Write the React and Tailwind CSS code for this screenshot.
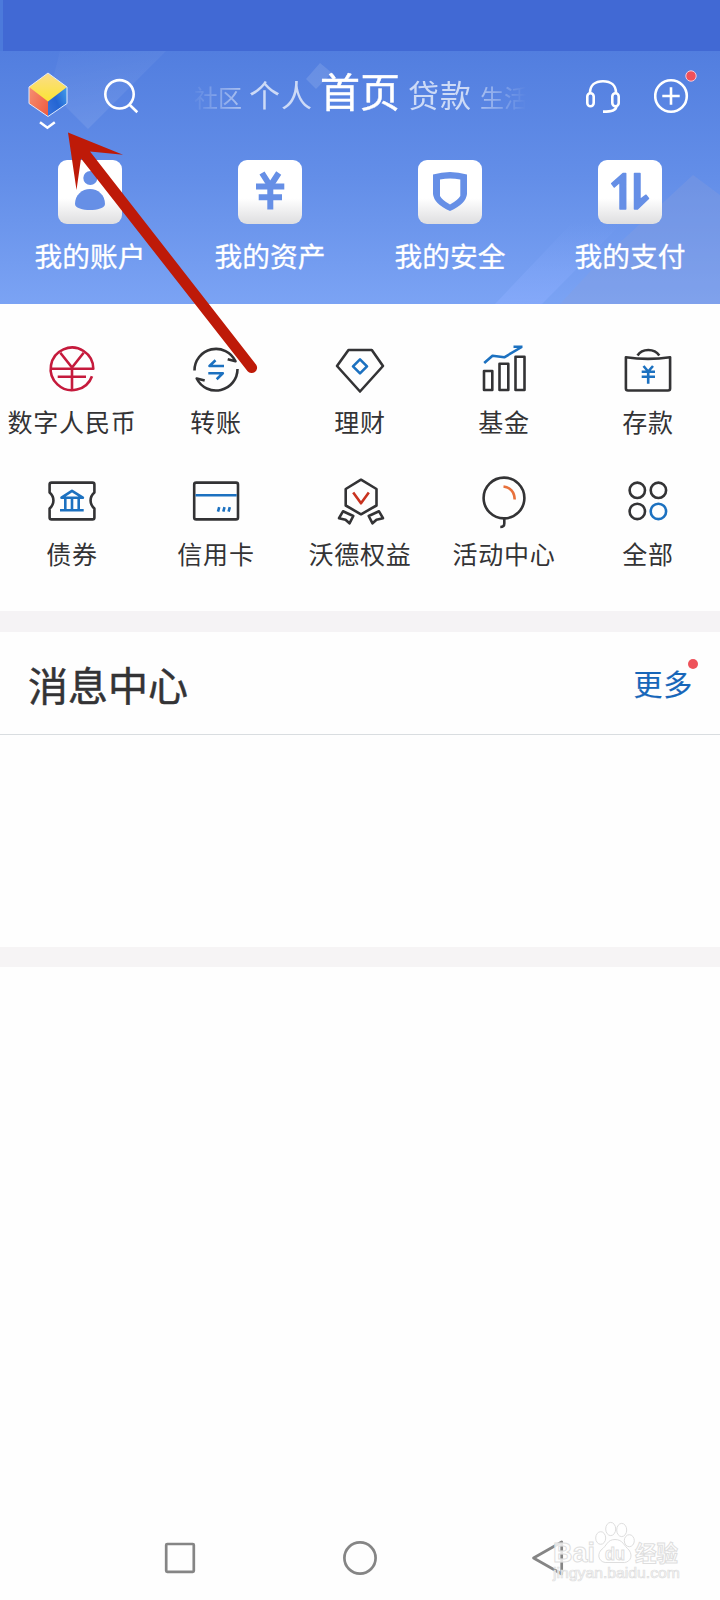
import React from 'react';

const tabs = [
  { label: '社区', cls: 'text-[24px] opacity-60 mr-[7px]' },
  { label: '个人', cls: 'text-[31px] opacity-70 tracking-[1px] mr-[7px]' },
  { label: '首页', cls: 'text-[40px] mr-[8px] [-webkit-text-stroke:0.4px_#fff]' },
  { label: '贷款', cls: 'text-[31px] opacity-70 tracking-[1px] mr-[8px]' },
  { label: '生活', cls: 'text-[24px] opacity-60' },
];

const shortcuts = [
  {
    label: '我的账户',
    icon: (
      <g fill="#668fe6">
        <circle cx="32.3" cy="18" r="7" />
        <path d="M17 44C17 35 24 29 32 29S47 35 47 44C47 48 39 50 32 50S17 48 17 44Z" />
      </g>
    ),
  },
  {
    label: '我的资产',
    icon: (
      <g fill="none" stroke="#668fe6" strokeWidth="6" strokeLinejoin="round">
        <path d="M24 13L32.3 26L40.7 13M32.3 25V49.5" />
        <path d="M18 26.5H46.3M20.7 37.3H44" />
      </g>
    ),
  },
  {
    label: '我的安全',
    icon: (
      <path
        fill="#668fe6"
        fillRule="evenodd"
        d="M15 14.5Q32 9.5 49 14.5V34Q48 44 32 51Q16 44 15 34ZM22 19.5V36Q24 40 32 44.5Q40 40 42.3 36V19.5Q32 17.5 22 19.5Z"
      />
    ),
  },
  {
    label: '我的支付',
    icon: (
      <g fill="#668fe6" stroke="#668fe6" strokeWidth="1.5" strokeLinejoin="round">
        <path d="M13.7 23.5L25 13.5H27.7V49H22V22L16.3 27Z" />
        <path d="M36.5 13.5H42V39.5L48 35.2L50.5 38.5L39.5 49H36.5Z" />
      </g>
    ),
  },
];

const services = [
  {
    label: '数字人民币',
    icon: (
      <g stroke="#c51a3c">
        <path d="M48 35.2A21.3 21.3 0 1 1 49.3 27.7H6.7" />
        <path d="M16.3 11.7L28 26.5L39.7 11.7M28 26V50M13.7 35.7H42" />
      </g>
    ),
  },
  {
    label: '转账',
    icon: (
      <g>
        <path d="M6.5 29.5A21.5 21.5 0 0 1 47.5 20.3L39.7 18.3" />
        <path d="M49.5 28A21.5 21.5 0 0 1 8.7 37.5L16.7 39.5" />
        <path stroke="#1c71c0" d="M36 25H21.5L27.5 19.3M20.3 32.3H34.8L28.7 38.3" />
      </g>
    ),
  },
  {
    label: '理财',
    icon: (
      <g>
        <path d="M16.5 9H39.8L51 25L28 50.5L5 25Z" />
        <path stroke="#1c71c0" d="M28 18.3L35 25.3L28 32.3L21 25.3Z" />
      </g>
    ),
  },
  {
    label: '基金',
    icon: (
      <g>
        <path d="M8 30H16.3V49H8ZM23.5 22.7H32.3V49H23.5ZM39.5 15.8H48.5V49H39.5Z" />
        <path stroke="#1c71c0" d="M8.2 22L16.5 14.7L28.3 16.3L45.7 6M37.5 5.7H46.5" />
      </g>
    ),
  },
  {
    label: '存款',
    icon: (
      <g>
        <path d="M5.9 16.3Q28 19.5 50.1 16.3V47.5Q50.1 49.5 48 49.5H8Q5.9 49.5 5.9 47.5Z" />
        <path d="M17.5 14.5Q21 9 28.3 9T39.3 14.5" />
        <path stroke="#1c71c0" d="M23.5 25L28.2 30.5L33 25M21.7 30.7H35M21.7 35.7H35M28.2 30.5V42.7" />
      </g>
    ),
  },
  {
    label: '债券',
    icon: (
      <g>
        <path d="M7.5 9.6H48.5Q50.4 9.6 50.4 11.5V19.5C45.3 24 45.3 31 50.4 35.5V44.5Q50.4 46.4 48.5 46.4H7.5Q5.6 46.4 5.6 44.5V35.5C10.7 31 10.7 24 5.6 19.5V11.5Q5.6 9.6 7.5 9.6Z" />
        <path stroke="#1c71c0" d="M17.5 24.7L28 17.8L38.8 24.7ZM21.3 25V37M28 25V37M34.7 25V37M16 37.3H39.7" />
      </g>
    ),
  },
  {
    label: '信用卡',
    icon: (
      <g>
        <rect x="6.2" y="9.6" width="43.8" height="36.8" rx="2" />
        <path stroke="#1c71c0" d="M7.5 22.2H48.7M31.2 34.2L30 38.7M36.5 34.2L35.3 38.7M41.8 34.2L40.6 38.7" />
      </g>
    ),
  },
  {
    label: '沃德权益',
    icon: (
      <g>
        <path d="M29 6.7L44.5 16V32.5L29 41.3L13.7 32.5V16Z" />
        <path d="M11 38.3L21.3 43L17.5 50.3L13.5 46.7L7 45.2Z" />
        <path d="M47 38.3L36.7 43L40.5 50.3L44.5 46.7L51 45.2Z" />
        <path stroke="#c8321f" d="M21.2 19.5L29 30.3L36.8 19.5" />
      </g>
    ),
  },
  {
    label: '活动中心',
    icon: (
      <g>
        <circle cx="28" cy="25" r="20.4" />
        <path d="M28.3 46V50.5Q28.3 54 24.3 54" />
        <path stroke="#e8713c" d="M27.5 13.5C34 14.3 38.5 19 38.7 26.5" />
      </g>
    ),
  },
  {
    label: '全部',
    icon: (
      <g>
        <circle cx="17.3" cy="17.3" r="7.7" />
        <circle cx="38.4" cy="17.3" r="7.7" />
        <circle cx="17.3" cy="38.4" r="7.7" />
        <circle cx="38.4" cy="38.4" r="7.7" stroke="#1c71c0" />
      </g>
    ),
  },
];

function Logo() {
  return (
    <svg className="w-[40px] h-[58px]" viewBox="0 0 40 58" fill="none">
      <defs>
        <linearGradient id="logoTop" x1="0" y1="0" x2="0" y2="1">
          <stop offset="0" stopColor="#fbdc8a" />
          <stop offset="1" stopColor="#fbe534" />
        </linearGradient>
        <linearGradient id="logoLeft" x1="0" y1="0" x2="1" y2="1">
          <stop offset="0" stopColor="#f79a7c" />
          <stop offset="1" stopColor="#ee5a3f" />
        </linearGradient>
        <linearGradient id="logoRight" x1="1" y1="0" x2="0" y2="1">
          <stop offset="0" stopColor="#4fb4f4" />
          <stop offset="0.6" stopColor="#2465d3" />
          <stop offset="1" stopColor="#3974dc" />
        </linearGradient>
      </defs>
      <path d="M20 1L1 15V31.5L20 44.5Z" fill="url(#logoLeft)" />
      <path d="M20 1L39 15V31.5L20 44.5Z" fill="url(#logoRight)" />
      <path d="M20 1L39 15L20 29.5L1 15Z" fill="url(#logoTop)" />
      <path d="M20 1L39 15V31.5L20 44.5L1 31.5V15Z" stroke="#dfeafd" strokeWidth="1" />
      <path d="M12 50.3L19.4 55.8L26.8 50.3" stroke="#fff" strokeWidth="2.5" />
    </svg>
  );
}

function HeaderBackdrop() {
  return (
    <svg className="absolute inset-0 w-full h-full" viewBox="0 0 720 253" preserveAspectRatio="none">
      <defs>
        <linearGradient id="beam" x1="0" y1="0" x2="0.3" y2="1">
          <stop offset="0" stopColor="#fff" stopOpacity="0.02" />
          <stop offset="1" stopColor="#fff" stopOpacity="0.09" />
        </linearGradient>
        <linearGradient id="ray" x1="0" y1="0" x2="0" y2="1">
          <stop offset="0" stopColor="#7fa4f6" stopOpacity="0" />
          <stop offset="1" stopColor="#86aafb" stopOpacity="0.8" />
        </linearGradient>
      </defs>
      <path d="M60 0H166L88 78L50 40Z" fill="url(#beam)" />
      <path d="M320 12L332 22L316 38L306 28Z" fill="#fff" opacity="0.12" />
      <path d="M572 172H622L542 253H495Z" fill="url(#ray)" />
      <path d="M693 124L720 144V253H560L600 210Z" fill="#8a9edb" opacity="0.3" />
    </svg>
  );
}

function Header() {
  return (
    <header className="relative h-[253px] bg-linear-to-b from-[#527edf] via-[#638ee8] to-[#7ba3f4] text-white overflow-hidden">
      <HeaderBackdrop />
      <div className="relative flex items-start h-[109px] pl-[28px]">
        <div className="pt-[21px]">
          <Logo />
        </div>
        <svg className="w-[36px] h-[36px] mt-[27px] ml-[35px]" viewBox="0 0 36 36" fill="none" stroke="#fff" strokeWidth="2.6">
          <circle cx="16.5" cy="16.3" r="14.2" />
          <path d="M26.3 26.5L34.3 34.3" />
        </svg>
        <nav className="flex items-baseline w-[340px] h-[80px] ml-[51px] pt-[10px] pl-1 leading-[58px] whitespace-nowrap overflow-hidden mask-[linear-gradient(to_right,transparent,#000_18%,#000_82%,transparent_99%)]">
          {tabs.map((tab) => (
            <span key={tab.label} className={tab.cls}>
              {tab.label}
            </span>
          ))}
        </nav>
        <svg className="w-[36px] h-[36px] mt-[28px] ml-[55px]" viewBox="0 0 36 36" fill="none" stroke="#fff" strokeWidth="2.6">
          <path d="M5 14C5 6.5 10 2.3 18 2.3S31 6.5 31 14" />
          <rect x="2.3" y="14.3" width="6.4" height="13" rx="3.2" />
          <rect x="27.3" y="14.3" width="6.4" height="13" rx="3.2" />
          <path d="M31.5 27C31 31.5 27 32.5 18 32.6" />
        </svg>
        <svg className="w-[46px] h-[48px] mt-[17px] ml-[33px]" viewBox="0 0 46 48" fill="none" stroke="#fff" strokeWidth="2.6">
          <circle cx="17" cy="28" r="15.8" />
          <path d="M17 19.3V36.7M8.3 28H25.7" />
          <circle cx="37" cy="8" r="5.2" fill="#f0505a" stroke="#f3c9dc" strokeWidth="1" />
        </svg>
      </div>
      <div className="relative grid grid-cols-4">
        {shortcuts.map((item) => (
          <div key={item.label} className="flex flex-col items-center">
            <div className="w-[64px] h-[64px] rounded-[9px] bg-linear-to-b from-white from-60% to-[#dedee0]">
              <svg className="w-full h-full" viewBox="0 0 64 64">
                {item.icon}
              </svg>
            </div>
            <span className="mt-[11px] text-[27.7px] leading-[40px] [-webkit-text-stroke:0.3px_#fff]">{item.label}</span>
          </div>
        ))}
      </div>
    </header>
  );
}

function Services() {
  return (
    <section className="grid grid-cols-5 gap-y-[32px] h-[307px] content-start pt-[37px]">
      {services.map((item) => (
        <div key={item.label} className="flex flex-col items-center">
          <svg
            className="w-[56px] h-[56px]"
            viewBox="0 0 56 56"
            fill="none"
            stroke="#333335"
            strokeWidth="2.6"
            strokeLinejoin="round"
          >
            {item.icon}
          </svg>
          <span className="mt-[4px] h-[40px] text-[25px] leading-[40px] tracking-[0.8px] whitespace-nowrap">{item.label}</span>
        </div>
      ))}
    </section>
  );
}

function MessageCenter() {
  return (
    <section className="h-[315px]">
      <div className="flex items-center justify-between h-[103px] pl-[28px] pr-[27px] border-b border-[#d9dde0]">
        <h2 className="pt-[2px] text-[40px] leading-[56px] [-webkit-text-stroke:0.5px_#333335]">消息中心</h2>
        <a className="relative text-[29px] leading-[40px] tracking-[0.7px] text-[#1766b9] [-webkit-text-stroke:0.2px_#1766b9]">
          更多
          <span className="absolute -top-[4px] -right-[5px] w-[10px] h-[10px] rounded-full bg-[#ee525a]" />
        </a>
      </div>
    </section>
  );
}

function Watermark() {
  return (
    <svg
      className="absolute right-[36px] bottom-[12px] w-[136px] h-[68px]"
      viewBox="0 0 136 68"
      fill="#fff"
      fillOpacity="0.8"
      stroke="#dedede"
      strokeWidth="1"
      fontFamily='"Liberation Sans", "Noto Sans CJK SC", sans-serif'
      fontWeight="700"
    >
      <ellipse cx="52.7" cy="18" rx="5" ry="6.3" />
      <ellipse cx="62.7" cy="9" rx="5" ry="6.6" />
      <ellipse cx="73.7" cy="10" rx="5" ry="6.6" />
      <ellipse cx="81.3" cy="20.7" rx="5" ry="6" />
      <path d="M67 19.5C75 19.5 76 26 81 30C86 37 81 43.5 74 42.5H60C52 43.5 48 36 53 30C59 26 59 19.5 67 19.5Z" />
      <text x="5" y="42" fontSize="27" textLength="42" lengthAdjust="spacingAndGlyphs">Bai</text>
      <text x="57" y="39.5" fontSize="18" textLength="20" lengthAdjust="spacingAndGlyphs">du</text>
      <text x="87" y="41" fontSize="21.5">经验</text>
      <text x="5" y="58" fontSize="14" fontWeight="400" strokeWidth="0.7" textLength="127" lengthAdjust="spacingAndGlyphs">jingyan.baidu.com</text>
    </svg>
  );
}

function NavBar() {
  return (
    <footer className="relative grid grid-cols-3 items-center justify-items-center h-[84px] px-[90px]">
      <svg className="w-[36px] h-[36px]" viewBox="0 0 36 36" fill="none" stroke="#858585" strokeWidth="2.7">
        <rect x="4.2" y="4" width="27.6" height="27.8" rx="1" />
      </svg>
      <svg className="w-[36px] h-[36px]" viewBox="0 0 36 36" fill="none" stroke="#858585" strokeWidth="2.7">
        <circle cx="18" cy="18" r="15.6" />
      </svg>
      <svg className="w-[48px] h-[36px]" viewBox="0 0 48 36" fill="none" stroke="#858585" strokeWidth="2.7">
        <path d="M17.5 18L45.7 2V34Z" strokeLinejoin="round" />
      </svg>
      <Watermark />
    </footer>
  );
}

function App() {
  return (
    <div className="relative flex flex-col w-[720px] h-[1600px] bg-[#fefefe] text-[#333335] overflow-hidden font-['Noto_Sans_CJK_SC',sans-serif]">
      <div className="h-[51px] shrink-0 bg-[#4169d4] border-l-[3px] border-[#4c7adb]" />
      <Header />
      <Services />
      <div className="h-[21px] bg-[#f5f3f5]" />
      <MessageCenter />
      <div className="h-[20px] bg-[#f6f4f5]" />
      <main className="grow" />
      <NavBar />

      {/* Pointer to the logo menu */}
      <svg className="absolute left-[60px] top-[125px] w-[205px] h-[255px]" viewBox="60 125 205 255" fill="#be1a08">
        <path d="M68 132.5L123 154.8L90 151.5L256.2 364.7A5.4 5.4 0 0 1 247.6 371.2L81 158.5L76.5 190Z" />
      </svg>
    </div>
  );
}

export default App;
